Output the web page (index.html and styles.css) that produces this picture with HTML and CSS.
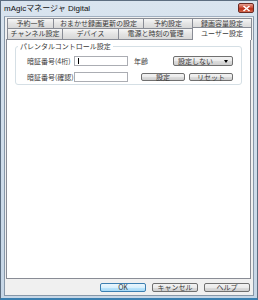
FILE: index.html
```html
<!DOCTYPE html>
<html>
<head>
<meta charset="utf-8">
<link rel="stylesheet" href="styles.css">
</head>
<body>
<div class="window">
  <div class="titlebar">
    <span class="title">mAgicマネージャ Digital</span>
    <span class="close"><svg width="9" height="7" viewBox="0 0 9 7"><path d="M1.5 1 L7.5 6 M7.5 1 L1.5 6" stroke="#fff" stroke-width="1.6"/></svg></span>
  </div>
  <div class="client">
    <div class="tabs">
      <div class="tabrow row1">
        <div class="tab w46">予約一覧</div>
        <div class="tab w90">おまかせ録画更新の設定</div>
        <div class="tab w49">予約設定</div>
        <div class="tab w59">録画容量設定</div>
      </div>
      <div class="tabrow row2">
        <div class="tab w55">チャンネル設定</div>
        <div class="tab w56">デバイス</div>
        <div class="tab w74">電源と時刻の管理</div>
        <div class="tab sel">ユーザー設定</div>
      </div>
    </div>
    <div class="panel">
      <fieldset class="group">
        <legend>パレンタルコントロール設定</legend>
        <div class="row">
          <span class="label">暗証番号(4桁)</span>
          <span class="input"><span class="caret"></span></span>
          <span class="label age">年齢</span>
          <span class="select">設定しない<span class="arrow"></span></span>
        </div>
        <div class="row">
          <span class="label">暗証番号(確認)</span>
          <span class="input"></span>
          <span class="btn small b1">設定</span>
          <span class="btn small">リセット</span>
        </div>
      </fieldset>
    </div>
    <div class="buttons">
      <span class="btn def">OK</span>
      <span class="btn">キャンセル</span>
      <span class="btn">ヘルプ</span>
    </div>
  </div>
</div>
</body>
</html>
```
FILE: styles.css
```css
html, body { margin: 0; padding: 0; }
body { width: 258px; height: 300px; overflow: hidden; background: #fff;
  font-family: "Noto Sans CJK JP", "Noto Sans", sans-serif; font-size: 7px; color: #3a3a3a; }
.window { box-sizing: border-box; width: 258px; height: 300px; display: flex; flex-direction: column;
  background: linear-gradient(#d9e4ef, #c6d6e6); border: 1px solid #5c6d80; border-bottom: 2px solid #3a7fb0; }
.titlebar { height: 15px; display: flex; align-items: center; justify-content: space-between; padding: 0 3px 0 3px; }
.title { font-family: "Liberation Sans", "Noto Sans CJK JP", sans-serif; font-size: 8px; color: #111; line-height: 1; }
.close { width: 16px; height: 10px; box-sizing: border-box; border: 1px solid #6b2a24; border-radius: 2px;
  background: linear-gradient(#e8a090, #c8452f 50%, #b92c14 60%, #d66a4f); display: flex; align-items: center; justify-content: center; margin-top: -1px; }
.client { flex: 1; margin: 0 3px 2px 3px; background: #f0f0f0; display: flex; flex-direction: column; padding: 1px 1px 0 1px; border: 1px solid #8797a8; border-top-color: #a0afc0; }
.tabs { padding: 0 0 0 1px; }
.tabrow { display: flex; }
.tab { box-sizing: border-box; height: 10px; border: 1px solid #898c95; border-bottom: none; margin-right: -1px;
  background: linear-gradient(#f6f6f6, #e4e4e4 50%, #d8d8d8); text-align: center; line-height: 9px; white-space: nowrap; font-size: 7px; }
.row2 .tab { height: 11px; }
.w46 { width: 47px; } .w90 { width: 91px; } .w49 { width: 50px; } .w59 { width: 60px; }
.w55 { width: 56px; } .w56 { width: 57px; } .w74 { width: 75px; }
.tab.sel { width: 60px; background: #fff; margin-top: -1px; height: 13px; margin-bottom: -1px; position: relative; z-index: 1; line-height: 10px; }
.panel { flex: 1; background: #fff; border: 1px solid #898c95; margin-right: 1px; padding: 2px 8px 0 8px; }
.group { border: 1px solid #d5dfe5; border-radius: 3px; margin: 0; padding: 4px 0 5px 11px; height: 32px; }
.group legend { padding: 0 2px; margin-left: -9px; font-size: 7px; line-height: 8px; }
.row { display: flex; align-items: center; height: 9px; margin-bottom: 7px; margin-top: 2px; }
.row + .row { margin-top: 0; }
.label { width: 47px; white-space: nowrap; font-size: 7px; }
.input { box-sizing: border-box; width: 54px; height: 10px; border: 1px solid #abadb3; background: #fff; display: flex; align-items: center; }
.caret { width: 1px; height: 6px; background: #000; margin-left: 3px; }
.age { width: 39px; margin-left: 6px; }
.select { box-sizing: border-box; width: 60px; height: 10px; border: 1px solid #707070; border-radius: 2px;
  background: linear-gradient(#f2f2f2, #ebebeb 50%, #dddddd 51%, #cfcfcf); display: flex; align-items: center; padding-left: 4px; position: relative; font-size: 7px; }
.arrow { position: absolute; right: 4px; top: 3px; width: 0; height: 0; border-left: 2px solid transparent; border-right: 2px solid transparent; border-top: 3px solid #000; }
.btn { box-sizing: border-box; width: 46px; height: 9px; border: 1px solid #707070; border-radius: 2px;
  background: linear-gradient(#f2f2f2, #ebebeb 50%, #dddddd 51%, #cfcfcf); display: inline-flex; align-items: center; justify-content: center; font-size: 7px; }
.small { width: 44px; height: 8px; margin-right: 4px; }
.b1 { margin-left: 13px; }
.buttons { height: 16px; display: flex; justify-content: flex-end; align-items: center; gap: 6px; padding-right: 2px; }
.btn.def { border-color: #3c7fb1; background: linear-gradient(#eaf6fd, #d9f0fc 50%, #bee6fd 51%, #a7d9f5); }
```
